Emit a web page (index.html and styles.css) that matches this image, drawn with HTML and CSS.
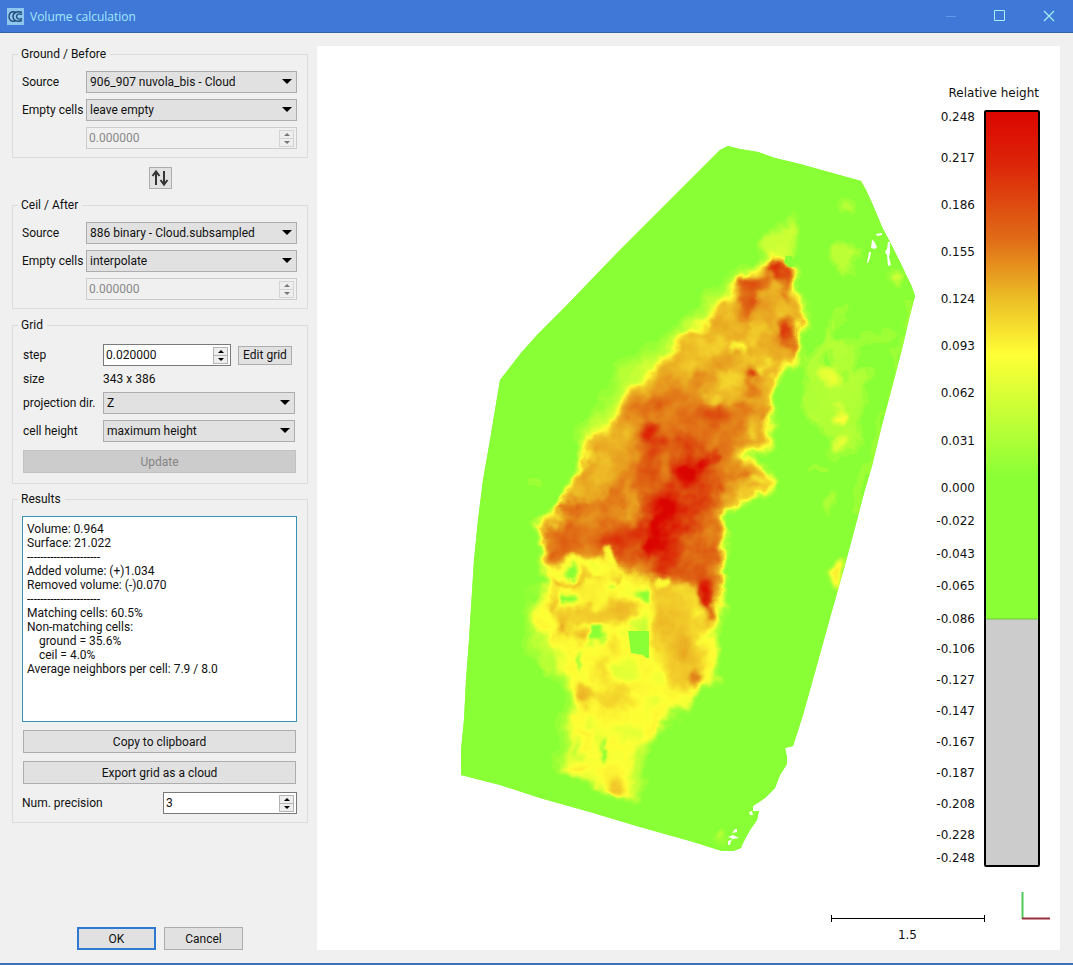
FILE: index.html
```html
<!DOCTYPE html>
<html lang="en">
  <head>
    <meta charset="UTF-8" />
    <meta name="viewport" content="width=device-width, initial-scale=1.0" />
    <title>Volume calculation</title>
    <link rel="stylesheet" href="styles.css">
  </head>
  <body>
    <header class="titlebar">
      <svg class="app-icon" width="17" height="17" viewBox="0 0 17 17">
        <rect width="17" height="17" fill="#8fc6ee"/>
        <g fill="none" stroke="#1f4a78" stroke-width="1.4">
          <path d="M9 4.500C4.500 2.500 2 5 2 8.500S4.500 14.500 9 12.500"/>
          <path d="M15 4.500C10 2.500 6 5 6 8.500S10 14.500 15 12.500"/>
          <path d="M15 6.500C12 5 9.500 6.500 9.500 8.500S12 12 15 10.500"/>
        </g>
      </svg>
      <h1>Volume calculation</h1>
      <div class="window-buttons">
        <button type="button" aria-label="Minimize" disabled><svg width="12" height="12" viewBox="0 0 12 12"><path d="M1 6.500h10" stroke="#5c9be8"/></svg></button>
        <button type="button" aria-label="Maximize"><svg width="12" height="12" viewBox="0 0 12 12"><path d="M.5 .5h10v10h-10z" fill="none" stroke="#a5f0f0"/></svg></button>
        <button type="button" aria-label="Close"><svg width="12" height="12" viewBox="0 0 12 12"><path d="M1 1l10 10M11 1L1 11" stroke="#a5f0f0" stroke-width="1.200"/></svg></button>
      </div>
    </header>

    <main class="dialog">
      <form class="panel">
        <fieldset>
          <legend>Ground / Before</legend>
          <div class="rows">
            <label for="groundSource">Source</label>
            <div class="combo"><select id="groundSource"><option>906_907 nuvola_bis - Cloud</option></select></div>
            <label for="groundEmpty">Empty cells</label>
            <div class="combo"><select id="groundEmpty"><option>leave empty</option></select></div>
            <div class="spin disabled value-only">
              <input type="text" value="0.000000" aria-label="Ground empty value" disabled>
              <span class="steps"><button type="button" class="up" aria-label="Increase" disabled></button><button type="button" class="down" aria-label="Decrease" disabled></button></span>
            </div>
          </div>
        </fieldset>

        <button type="button" class="swap" aria-label="Swap ground and ceil">
          <svg width="18" height="18" viewBox="0 0 18 18">
            <path d="M5 16V3M1.500 7L5 2.500L8.500 7M13 2v13M9.500 11L13 15.500L16.500 11" fill="none" stroke="#333" stroke-width="2"/>
          </svg>
        </button>

        <fieldset>
          <legend>Ceil / After</legend>
          <div class="rows">
            <label for="ceilSource">Source</label>
            <div class="combo"><select id="ceilSource"><option>886 binary - Cloud.subsampled</option></select></div>
            <label for="ceilEmpty">Empty cells</label>
            <div class="combo"><select id="ceilEmpty"><option>interpolate</option></select></div>
            <div class="spin disabled value-only">
              <input type="text" value="0.000000" aria-label="Ceil empty value" disabled>
              <span class="steps"><button type="button" class="up" aria-label="Increase" disabled></button><button type="button" class="down" aria-label="Decrease" disabled></button></span>
            </div>
          </div>
        </fieldset>

        <fieldset class="grid-box">
          <legend>Grid</legend>
          <div class="rows">
            <label for="step">step</label>
            <div class="step-row">
              <div class="spin">
                <input type="text" id="step" value="0.020000">
                <span class="steps"><button type="button" class="up" aria-label="Increase"></button><button type="button" class="down" aria-label="Decrease"></button></span>
              </div>
              <button type="button" class="btn edit">Edit grid</button>
            </div>
            <span>size</span>
            <span>343 x 386</span>
            <label for="projection">projection dir.</label>
            <div class="combo"><select id="projection"><option>Z</option></select></div>
            <label for="cellHeight">cell height</label>
            <div class="combo"><select id="cellHeight"><option>maximum height</option></select></div>
          </div>
          <button type="button" class="btn wide" disabled>Update</button>
        </fieldset>

        <fieldset class="results-box">
          <legend>Results</legend>
          <textarea aria-label="Results" readonly>Volume: 0.964
Surface: 21.022
----------------------
Added volume: (+)1.034
Removed volume: (-)0.070
----------------------
Matching cells: 60.5%
Non-matching cells:
    ground = 35.6%
    ceil = 4.0%
Average neighbors per cell: 7.9 / 8.0</textarea>
          <button type="button" class="btn wide">Copy to clipboard</button>
          <button type="button" class="btn wide">Export grid as a cloud</button>
          <div class="precision">
            <label for="precision">Num. precision</label>
            <div class="spin">
              <input type="text" id="precision" value="3">
              <span class="steps"><button type="button" class="up" aria-label="Increase"></button><button type="button" class="down" aria-label="Decrease"></button></span>
            </div>
          </div>
        </fieldset>

        <div class="actions">
          <button type="button" class="btn default">OK</button>
          <button type="button" class="btn">Cancel</button>
        </div>
      </form>

      <section class="viewer" aria-label="Height map">
        <svg class="scene" viewBox="317 46 743 904">
          <defs>
            <clipPath id="cloud">
              <path d="M720 150L728 146L740 149L758 152L775 158L800 164L825 171L861 181L866 190L872 203L880 222L883 229L890 242L900 262L912 287L915 296L910 315L903 345L895 376L890 395L882 425L872 466L864 493L857 520L845 565L830 618L815 672L803 715L793 746L785 748L787 757L787 764L780 775L775 788L765 798L753 806L753 811L759 811L757 820L750 830L743 843L741 848L733 851L722 851L690 841L640 827L590 812L540 798L500 785L461 775L461 750L464 720L466 680L469 640L474 560L478 520L483 480L490 440L500 380L521 353L537 335L565 307L617 253L690 180Z"/>
            </clipPath>
            <!-- grey level is the height, the transfer tables turn it into the colour ramp -->
            <filter id="ramp" x="440" y="120" width="500" height="760" filterUnits="userSpaceOnUse" color-interpolation-filters="sRGB">
              <feTurbulence type="fractalNoise" baseFrequency="0.04" numOctaves="3" seed="8" result="turbulence"/>
              <feColorMatrix values="1 0 0 0 0  1 0 0 0 0  1 0 0 0 0  0 0 0 0 1" result="noise"/>
              <feColorMatrix in="turbulence" values="0 1 0 0 0  0 0 1 0 0  1 0 0 0 0  0 0 0 0 1" result="shift"/>
              <feDisplacementMap in="SourceGraphic" in2="shift" scale="22" xChannelSelector="R" yChannelSelector="G" result="height"/>
              <feComposite in="height" in2="noise" operator="arithmetic" k1="0.45" k2="0.77"/>
              <feComponentTransfer>
                <feFuncR type="table" tableValues="0.54 1 0.92 0.87 0.86"/>
                <feFuncG type="table" tableValues="1 1 0.68 0.36 0.02"/>
                <feFuncB type="table" tableValues="0.21 0.21 0.14 0.07 0"/>
              </feComponentTransfer>
            </filter>
            <filter id="soft" x="-50%" y="-50%" width="200%" height="200%"><feGaussianBlur stdDeviation="3"/></filter>
            <filter id="softer" x="-50%" y="-50%" width="200%" height="200%"><feGaussianBlur stdDeviation="7"/></filter>
            <filter id="edge" x="-10%" y="-10%" width="120%" height="120%"><feGaussianBlur stdDeviation="2"/></filter>
            <linearGradient id="scale" x1="0" y1="0" x2="0" y2="1">
              <stop offset="0" stop-color="#dc0500"/>
              <stop offset="0.1" stop-color="#dc2308"/>
              <stop offset="0.25" stop-color="#e06a17"/>
              <stop offset="0.37" stop-color="#ecbe26"/>
              <stop offset="0.48" stop-color="#ffff36"/>
              <stop offset="0.6" stop-color="#c4ff36"/>
              <stop offset="0.72" stop-color="#8aff36"/>
              <stop offset="1" stop-color="#8aff36"/>
            </linearGradient>
          </defs>

          <g clip-path="url(#cloud)">
            <rect x="440" y="120" width="500" height="760" fill="#8aff36"/>
            <g filter="url(#ramp)">
              <rect x="400" y="80" width="580" height="840" fill="#000"/>

              <!-- low relief around the pile -->
              <g filter="url(#soft)" fill="#1f1f1f">
                <path d="M797 213L795 225L794 253L765 258L765 240L780 226Z" fill="#282828"/>
                <ellipse cx="845" cy="208" rx="6" ry="9"/>
                <ellipse cx="844" cy="257" rx="12" ry="17"/>
                <ellipse cx="841" cy="312" rx="4" ry="12" fill="#141414"/>
                <ellipse cx="896" cy="277" rx="5" ry="6" fill="#333"/>
                <path d="M805 352L828 340L832 318L838 318L838 345L855 352L858 375L872 368L873 385L862 410L857 440L848 453L830 450L824 430L806 420L803 390Z" fill="#191919"/>
                <path d="M838 346L893 330L895 335L850 350Z" fill="#181818"/>
                <ellipse cx="828" cy="378" rx="8" ry="12" fill="#363636"/>
                <ellipse cx="838" cy="415" rx="5" ry="6" fill="#484848"/>
                <ellipse cx="836" cy="446" rx="6" ry="5" fill="#383838"/>
                <ellipse cx="842" cy="375" rx="4" ry="6" fill="#000"/>
                <ellipse cx="827" cy="357" rx="5" ry="7" fill="#000"/>
                <ellipse cx="818" cy="468" rx="14" ry="5" fill="#080808"/>
                <ellipse cx="830" cy="505" rx="4" ry="14"/>
                <path d="M845 558L840 585L832 590L828 580L836 558Z" fill="#484848"/>
                <path d="M915 296L890 391L855 520L852 515L886 400L910 298Z" fill="#1c1c1c"/>
                <ellipse cx="533" cy="483" rx="6" ry="5" fill="#0c0c0c"/>
                <ellipse cx="720" cy="838" rx="3" ry="4" fill="#383838"/>
              </g>
              <g filter="url(#softer)" fill="#202020">
                <path d="M750 265L700 308L665 345L620 368L605 400L575 440L640 440L760 300Z"/>
                <path d="M533 590L530 655L570 685L560 770L600 770L590 580Z"/>
              </g>

              <!-- lower part -->
              <g filter="url(#soft)">
                <path d="M540 540L720 540L721 590L717 623L715 686L705 689L690 695L680 711L663 725L655 741L645 748L638 775L632 799L617 795L597 783L567 774L568 740L575 707L570 683L555 655L545 640L530 623L538 605L548 585Z" fill="#424242"/>
                <path d="M555 610L582 606L585 600L635 600L632 620L585 622L560 628Z" fill="#6c6c6c"/>
                <path d="M653 570L720 600L710 622L700 640L702 685L690 690L665 680L655 640Z" fill="#686868"/>
                <ellipse cx="680" cy="640" rx="12" ry="20" fill="#747474"/>
                <ellipse cx="697" cy="680" rx="4" ry="6" fill="#b8b8b8"/>
                <ellipse cx="588" cy="694" rx="9" ry="11" fill="#7c7c7c"/>
                <ellipse cx="615" cy="697" rx="22" ry="9" fill="#5c5c5c"/>
                <ellipse cx="604" cy="672" rx="6" ry="16" fill="#585858"/>
                <ellipse cx="613" cy="640" rx="6" ry="12" fill="#545454"/>
                <ellipse cx="566" cy="631" rx="4" ry="5" fill="#909090"/>
                <ellipse cx="581" cy="637" rx="4" ry="6" fill="#808080"/>
                <ellipse cx="617" cy="785" rx="7" ry="5" fill="#707070"/>
                <ellipse cx="576" cy="768" rx="6" ry="4" fill="#585858"/>
                <ellipse cx="580" cy="733" rx="8" ry="4" fill="#505050"/>
                <ellipse cx="548" cy="660" rx="12" ry="15" fill="#1c1c1c"/>
                <ellipse cx="536" cy="596" rx="10" ry="5" fill="#000"/>
                <ellipse cx="541" cy="575" rx="5" ry="8" fill="#000"/>
                <ellipse cx="545" cy="636" rx="5" ry="4" fill="#161616"/>
                <ellipse cx="626" cy="672" rx="18" ry="12" fill="#303030"/>
                <ellipse cx="640" cy="630" rx="7" ry="18" fill="#202020"/>
                <ellipse cx="629" cy="733" rx="15" ry="8" fill="#303030"/>
                <ellipse cx="590" cy="722" rx="8" ry="6" fill="#303030"/>
                <ellipse cx="655" cy="700" rx="8" ry="6" fill="#303030"/>
                <ellipse cx="576" cy="750" rx="5" ry="7" fill="#141414"/>
                <ellipse cx="596" cy="740" rx="6" ry="10" fill="#303030"/>
                <ellipse cx="709" cy="634" rx="5" ry="6" fill="#282828"/>
                <ellipse cx="696" cy="615" rx="4" ry="9" fill="#3a3a3a"/>
                <path d="M630 745L648 745L640 800L632 802Z" fill="#202020"/>
              </g>

              <!-- upper part -->
              <g filter="url(#soft)">
                <path d="M781 257L784 269L795 271L791 283L801 303L800 320L797 354L793 362L781 372L768 388L768 407L772 427L771 446L737 449L753 461L769 472L768 486L757 497L737 500L722 512L722 540L721 580L718 620L708 605L690 590L672 583L650 575L625 572L605 560L580 558L555 566L543 560L540 525L560 513L579 473L591 437L610 425L630 387L655 372L682 343L709 319L732 292L752 274L770 259Z" fill="#808080" stroke="#424242" stroke-width="5"/>
                <path d="M545 530L560 522L590 500L612 500L625 470L720 480L718 600L690 582L650 570L600 555L548 560Z" fill="#aaa"/>
              </g>
              <g filter="url(#softer)">
                <path d="M632 400L680 385L740 420L738 465L715 500L714 570L650 560L635 470Z" fill="#aaa"/>
                <path d="M636 425L660 420L668 450L690 438L722 455L715 490L700 540L716 600L690 585L620 565L600 545L635 520L640 470Z" fill="#c6c6c6"/>
                <path d="M678 468L706 460L708 478L696 505L686 545L655 565L642 545L656 500Z" fill="#e8e8e8"/>
              </g>
              <g filter="url(#soft)">
                <path d="M738 286L772 274L766 294L752 318L745 322L734 302Z" fill="#b4b4b4"/>
                <ellipse cx="751" cy="293" rx="10" ry="11" fill="#c4c4c4"/>
                <path d="M774 258L785 268L792 273L789 287L781 290L769 266Z" fill="#e0e0e0"/>
                <ellipse cx="784" cy="290" rx="3" ry="9" fill="#c8c8c8"/>
                <ellipse cx="790" cy="336" rx="7" ry="20" fill="#b8b8b8"/>
                <ellipse cx="788" cy="327" rx="5" ry="8" fill="#f0f0f0"/>
                <ellipse cx="752" cy="371" rx="6" ry="6" fill="#e8e8e8"/>
                <ellipse cx="749" cy="388" rx="4" ry="10" fill="#b0b0b0"/>
                <ellipse cx="739" cy="347" rx="6" ry="6" fill="#363636"/>
                <ellipse cx="757" cy="335" rx="14" ry="13" fill="#626262"/>
                <ellipse cx="765" cy="340" rx="5" ry="9" fill="#808080"/>
                <ellipse cx="708" cy="344" rx="22" ry="9" fill="#686868"/>
                <ellipse cx="728" cy="378" rx="13" ry="9" fill="#686868"/>
                <ellipse cx="713" cy="399" rx="9" ry="6" fill="#606060"/>
                <ellipse cx="766" cy="366" rx="8" ry="4" fill="#484848"/>
                <ellipse cx="695" cy="380" rx="9" ry="12" fill="#a0a0a0"/>
                <ellipse cx="716" cy="415" rx="7" ry="10" fill="#b4b4b4"/>
                <ellipse cx="743" cy="412" rx="10" ry="6" fill="#a4a4a4"/>
                <ellipse cx="763" cy="412" rx="4" ry="5" fill="#a4a4a4"/>
                <ellipse cx="752" cy="431" rx="5" ry="4" fill="#585858"/>
                <ellipse cx="651" cy="431" rx="11" ry="8" fill="#d8d8d8"/>
                <ellipse cx="650" cy="460" rx="8" ry="14" fill="#c8c8c8"/>
                <ellipse cx="666" cy="460" rx="5" ry="14" fill="#a8a8a8"/>
                <ellipse cx="706" cy="460" rx="14" ry="6" fill="#f0f0f0"/>
                <ellipse cx="686" cy="480" rx="9" ry="12" fill="#fff"/>
                <ellipse cx="658" cy="525" rx="8" ry="7" fill="#fff"/>
                <ellipse cx="650" cy="550" rx="8" ry="10" fill="#fff"/>
                <ellipse cx="677" cy="530" rx="7" ry="6" fill="#f4f4f4"/>
                <ellipse cx="632" cy="500" rx="6" ry="24" fill="#8c8c8c"/>
                <ellipse cx="600" cy="475" rx="14" ry="13" fill="#767676"/>
                <ellipse cx="576" cy="508" rx="14" ry="8" fill="#b4b4b4"/>
                <ellipse cx="618" cy="540" rx="10" ry="7" fill="#c0c0c0"/>
                <ellipse cx="706" cy="592" rx="8" ry="13" fill="#e0e0e0"/>
                <ellipse cx="711" cy="612" rx="5" ry="10" fill="#b0b0b0"/>
                <ellipse cx="706" cy="538" rx="8" ry="10" fill="#a0a0a0"/>
                <ellipse cx="760" cy="480" rx="7" ry="6" fill="#505050"/>
                <ellipse cx="742" cy="493" rx="7" ry="5" fill="#606060"/>
                <ellipse cx="742" cy="475" rx="8" ry="7" fill="#b4b4b4"/>
              </g>

              <!-- gaps between the two -->
              <g filter="url(#edge)">
                <g fill="#404040">
                  <ellipse cx="610" cy="558" rx="6" ry="9"/>
                  <ellipse cx="572" cy="565" rx="13" ry="7"/>
                  <ellipse cx="598" cy="571" rx="7" ry="7"/>
                  <ellipse cx="662" cy="578" rx="7" ry="5"/>
                  <ellipse cx="610" cy="583" rx="14" ry="6"/>
                  <path d="M552 583L605 583L605 606L552 606Z" fill="#464646"/>
                </g>
                <path d="M548 572L554 582L600 578L600 581L552 586ZM556 586L556 614L551 608ZM585 568L590 576L586 578ZM604 570L620 578L618 582Z" fill="#808080"/>
                <g fill="#000">
                  <path d="M562 572L571 563L578 568L578 578L568 579Z"/>
                  <path d="M557 595L580 594L582 599L572 605L557 604Z"/>
                  <path d="M637 587L650 586L650 600L642 604L637 599Z"/>
                  <path d="M586 625L602 624L600 640L594 647L588 642Z"/>
                  <ellipse cx="583" cy="661" rx="4" ry="9" fill="#101010"/>
                  <ellipse cx="609" cy="586" rx="4" ry="4" fill="#1c1c1c"/>
                  <ellipse cx="604" cy="755" rx="4" ry="10"/>
                </g>
              </g>
            </g>
            <path d="M786 256L792 256L794 267L789 267L784 262ZM628 631L649 631L649 658L646 658L643 655L631 653Z" fill="#8aff36"/>
            <!-- holes in the cloud -->
            <path d="M872 240L874 241L877 247L875 249L871 248ZM869 252L871 252L870 258L868 263L867 263ZM876 234L882 233L882 235L877 236ZM888 242L890 242L890 252L889 257L891 265L888 266L887 255L885 252L887 249ZM749 812L752 811L753 815L750 815ZM735 829L737 829L737 832L732 833ZM728 837L733 835L739 838L733 839L731 838ZM728 841L733 839L731 841L730 845L728 845Z" fill="#fff"/>
          </g>

          <rect x="985" y="111" width="54" height="508" fill="url(#scale)"/>
          <rect x="985" y="619" width="54" height="247" fill="#ccc"/>
          <path d="M985 619h54" stroke="#6cc83a"/>
          <rect x="985" y="111" width="54" height="755" rx="1" fill="none" stroke="#000" stroke-width="2"/>

          <g class="ticks">
            <text x="1039" y="97">Relative height</text>
            <text x="975" y="121">0.248</text>
            <text x="975" y="162">0.217</text>
            <text x="975" y="209">0.186</text>
            <text x="975" y="256">0.155</text>
            <text x="975" y="303">0.124</text>
            <text x="975" y="350">0.093</text>
            <text x="975" y="397">0.062</text>
            <text x="975" y="445">0.031</text>
            <text x="975" y="492">0.000</text>
            <text x="975" y="525">-0.022</text>
            <text x="975" y="558">-0.043</text>
            <text x="975" y="590">-0.065</text>
            <text x="975" y="623">-0.086</text>
            <text x="975" y="653">-0.106</text>
            <text x="975" y="684">-0.127</text>
            <text x="975" y="715">-0.147</text>
            <text x="975" y="746">-0.167</text>
            <text x="975" y="777">-0.187</text>
            <text x="975" y="808">-0.208</text>
            <text x="975" y="839">-0.228</text>
            <text x="975" y="862">-0.248</text>
            <text x="917" y="939">1.5</text>
          </g>

          <path d="M831.500 915v7M984.500 915v7M831 918.500h154" fill="none" stroke="#000"/>
          <path d="M1022.500 892v27" stroke="#4fc957" stroke-width="2"/>
          <path d="M1022 918.500h28" stroke="#982f3f" stroke-width="2"/>
        </svg>
      </section>
    </main>
  </body>
</html>
```
FILE: styles.css
```css
* {
  margin: 0;
  padding: 0;
  box-sizing: border-box;
}

body {
  display: flex;
  flex-direction: column;
  min-height: 100vh;
  background: #f0f0f0;
  border-bottom: 2px solid #3a72b8;
  color: #111;
  font-family: Roboto, "DejaVu Sans Condensed", sans-serif;
  font-size: 12px;
  line-height: 14px;
}

button,
input,
select,
textarea {
  font: inherit;
  color: inherit;
}

.titlebar {
  display: flex;
  align-items: center;
  gap: 6px;
  height: 33px;
  padding-left: 7px;
  background: #4078d8;
  border-bottom: 1px solid #35619f;
}

.titlebar h1 {
  flex: 1;
  padding-top: 2px;
  color: #a2e9fa;
  font-family: "Open Sans", "Noto Sans", sans-serif;
  font-size: 12px;
  font-weight: 400;
  line-height: 18px;
}

.window-buttons {
  display: flex;
}

.window-buttons button {
  display: flex;
  align-items: center;
  justify-content: center;
  width: 49px;
  height: 32px;
  background: none;
  border: none;
}

.dialog {
  flex: 1;
  display: flex;
  gap: 9px;
  padding: 13px 13px 13px 12px;
}

.panel {
  flex: none;
  display: flex;
  flex-direction: column;
  width: 296px;
  padding-top: 1px;
}

fieldset {
  min-width: 0;
  padding: 10px 10px 8px 9px;
  border: 1px solid #dcdcdc;
}

legend {
  margin-left: -4px;
  padding: 0 4px 0 3px;
}

.rows {
  display: grid;
  grid-template-columns: 58px 1fr;
  gap: 6px;
  align-items: center;
}

.rows label {
  white-space: nowrap;
}

.value-only {
  grid-column: 2;
}

.combo {
  position: relative;
}

.combo::after {
  content: "";
  position: absolute;
  top: 8px;
  right: 5px;
  border: 5px solid transparent;
  border-top-color: #000;
  border-bottom: none;
  pointer-events: none;
}

.combo select {
  display: block;
  width: 100%;
  height: 22px;
  padding: 0 18px 0 3px;
  appearance: none;
  background: #e1e1e1;
  border: 1px solid #adadad;
  border-radius: 0;
}

.spin {
  display: flex;
  align-items: center;
  height: 22px;
  padding-right: 2px;
  background: #fff;
  border: 1px solid #7a7a7a;
}

.spin input {
  flex: 1;
  min-width: 0;
  height: 20px;
  padding: 0 2px;
  background: none;
  border: none;
}

.steps {
  display: flex;
  flex-direction: column;
  width: 15px;
}

.steps button {
  display: flex;
  align-items: center;
  justify-content: center;
  height: 9px;
  background: #eee;
  border: 1px solid #b4b4b4;
}

.steps .down {
  margin-top: -1px;
}

.steps button::before {
  content: "";
  border: 3px solid transparent;
}

.steps .up::before {
  border-bottom-color: #000;
  border-top: none;
}

.steps .down::before {
  border-top-color: #000;
  border-bottom: none;
}

.spin.disabled {
  background: #f0f0f0;
  border-color: #ccc;
  color: #888;
}

.spin.disabled .steps button {
  border-color: #d4d4d4;
}

.spin.disabled .up::before {
  border-bottom-color: #777;
}

.spin.disabled .down::before {
  border-top-color: #777;
}

.swap {
  display: flex;
  align-items: center;
  justify-content: center;
  align-self: center;
  width: 23px;
  height: 22px;
  margin: 9px 0;
  background: #e1e1e1;
  border: 1px solid #adadad;
}

.btn {
  height: 23px;
  background: #e1e1e1;
  border: 1px solid #adadad;
}

.btn.wide {
  display: block;
  width: 273px;
  margin-top: 8px;
  margin-left: 1px;
}

.btn:disabled {
  background: #ccc;
  border-color: #c2c2c2;
  color: #858585;
}

.grid-box {
  margin: 9px 0 8px;
  padding: 12px 10px 10px 9px;
}

.grid-box .rows {
  grid-template-columns: 74px 1fr;
  padding: 0 2px 0 1px;
}

.step-row {
  display: flex;
  align-items: center;
  gap: 7px;
}

.step-row .spin {
  width: 128px;
}

.btn.edit {
  width: 54px;
  height: 19px;
}

textarea {
  display: block;
  width: 100%;
  height: 206px;
  padding: 5px 4px;
  background: #fff;
  border: 1px solid #3a93b0;
  outline: none;
  resize: none;
}

.precision {
  display: flex;
  align-items: center;
  justify-content: space-between;
  margin-top: 8px;
}

.precision .spin {
  width: 134px;
}

.actions {
  display: flex;
  justify-content: center;
  gap: 8px;
  margin-top: auto;
}

.actions .btn {
  width: 79px;
}

.btn.default {
  border: 2px solid #2f7ad0;
}

.viewer {
  flex: 1;
  min-width: 0;
  background: #fff;
}

.scene {
  display: block;
  width: 100%;
  height: 100%;
}

.ticks text {
  fill: #111;
  font-family: "DejaVu Sans", sans-serif;
  font-size: 12px;
  text-anchor: end;
}
```
